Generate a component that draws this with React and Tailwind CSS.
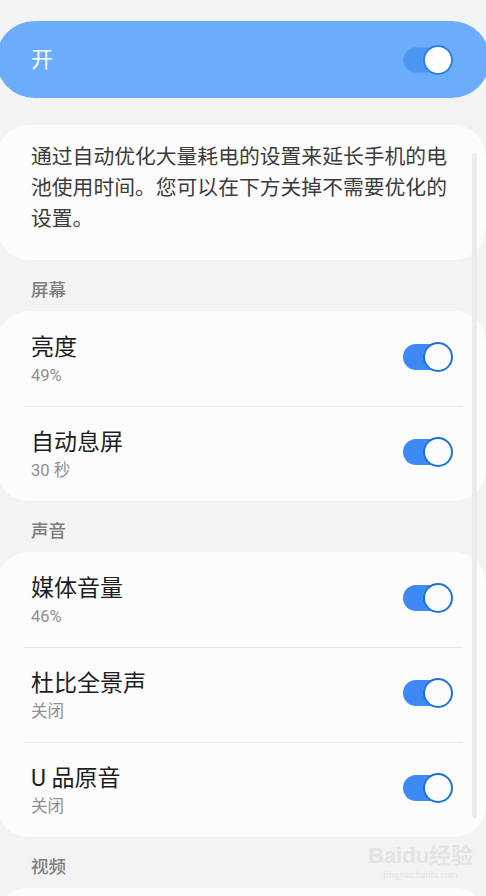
import React from "react";

function Toggle({ top, className = "" }) {
  return (
    <div className={"relative w-[50px] h-[30px] shrink-0 " + className}>
      <div
        className={
          "absolute left-0 top-[2px] h-[26px] w-[46px] rounded-full " +
          (top ? "bg-[#4c95f2] border border-[#5d9ff0]" : "bg-[#3d8af4]")
        }
      />
      <div
        className={
          "absolute right-0 top-0 h-[30px] w-[30px] rounded-full border-2 " +
          (top ? "bg-white border-[#2f80e6]" : "bg-[#fbfbfb] border-[#1d74d8]")
        }
      />
    </div>
  );
}

function Row({ title, sub, divider }) {
  return (
    <div>
      {divider && <div className="ml-[27px] mr-[23px] h-px bg-[#e5e5e5]" />}
      <div
        className={
          "flex items-start pl-[34px] pr-[33px] pb-[19px] " +
          (divider ? "pt-[22px]" : "pt-[23px]")
        }
      >
        <div className="flex-1">
          <div className="text-[23px] leading-[28px] text-[#1e1e1e]">{title}</div>
          <div className="mt-[2px] text-[16.5px] leading-[23px] text-[#8f8f8f]">{sub}</div>
        </div>
        <Toggle className="mt-[8px]" />
      </div>
    </div>
  );
}

function Header({ children }) {
  return (
    <div className="pl-[31px] pt-[20px] pb-[10px] text-[17.5px] leading-[21px] font-medium text-[#7d7d7d]">
      {children}
    </div>
  );
}

export default function App() {
  return (
    <div className="relative w-[486px] h-[896px] overflow-hidden bg-[#f3f3f3] font-['Roboto','Noto_Sans_CJK_SC',sans-serif]">
      <div className="pt-[21px]">
        <div className="-ml-[4px] -mr-[4px] h-[77px] rounded-full bg-[#6badfc] flex items-center pl-[35px] pr-[37px]">
          <div className="flex-1 text-[22px] text-white leading-[28px]">开</div>
          <Toggle top />
        </div>

        <div className="mt-[27px] -ml-[3px] h-[135px] rounded-[32px] bg-[#fcfcfc] pl-[34px] pt-[17px]">
          <p className="text-[20.8px] leading-[31px] text-[#3c3c3c] w-[430px]">
            通过自动优化大量耗电的设置来延长手机的电池使用时间。您可以在下方关掉不需要优化的设置。
          </p>
        </div>

        <Header>屏幕</Header>
        <div className="-ml-[3px] rounded-[32px] bg-[#fcfcfc]">
          <Row title="亮度" sub="49%" />
          <Row title="自动息屏" sub="30 秒" divider />
        </div>

        <Header>声音</Header>
        <div className="-ml-[3px] rounded-[32px] bg-[#fcfcfc]">
          <Row title="媒体音量" sub="46%" />
          <Row title="杜比全景声" sub="关闭" divider />
          <Row title="U 品原音" sub="关闭" divider />
        </div>

        <Header>视频</Header>
        <div className="-ml-[3px] h-[60px] rounded-[32px] bg-[#fcfcfc]" />
      </div>

      <div className="absolute left-[472px] top-[153px] w-[5px] h-[665px] rounded-full bg-[#ebebeb]" />

      <div className="absolute left-[368px] top-[843px] flex flex-col items-center text-[#e4e4e4]">
        <div className="text-[22px] leading-[26px] font-bold font-['Liberation_Sans','Noto_Sans_CJK_SC',sans-serif]">Baidu经验</div>
        <div className="text-[10px] leading-[12px] font-['Liberation_Serif',serif]">jingyan.baidu.com</div>
      </div>
    </div>
  );
}
